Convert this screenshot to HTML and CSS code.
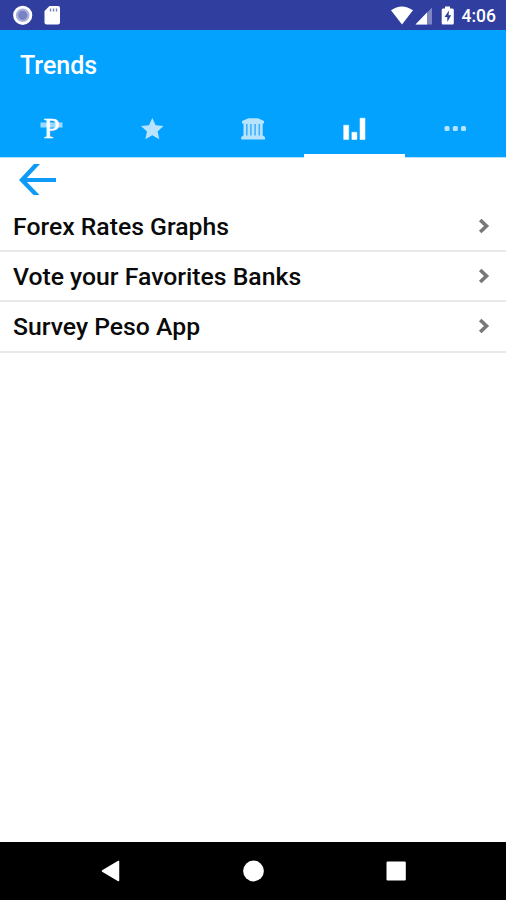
FILE: index.html
```html
<!DOCTYPE html>
<html lang="en">

<head>
    <meta charset="UTF-8">
    <meta name="viewport" content="width=device-width, initial-scale=1.0">
    <link rel="stylesheet" href="styles.css">
    <title>Trends</title>
</head>

<body>

    <div class="status-bar">
        <svg class="status-left" width="54" height="30" viewBox="0 0 54 30">
            <circle cx="10.7" cy="15.3" r="8.2" fill="#a9b0dc" stroke="#fff" stroke-width="2.8"/>
            <circle cx="10.7" cy="15.3" r="4.600" fill="#7883c4"/>
            <path d="M37.5 6H46Q48 6 48 8V22.500Q48 24.500 46 24.500H34.500Q32.500 24.500 32.500 22.500V11Z" fill="#fff"/>
            <path d="M38.500 8.500v3M41.500 8.500v3M44.500 8.500v3" stroke="#7880bd" stroke-width="1.400"/>
        </svg>
        <div class="status-right">
            <svg width="68" height="30" viewBox="0 0 68 30">
                <path d="M2 10.300Q12.800 2.500 24 10.300L13 24.500Z" fill="#fff"/>
                <path d="M26.500 24.500L43 7.500V24.500Z" fill="#7f87c3"/>
                <path d="M26.500 24.500L38 12.500V24.500Z" fill="#fff"/>
                <path d="M56 6.500H61V8.500H63.500Q64.800 8.500 64.800 10V23Q64.800 24.500 63.500 24.500H54Q52.700 24.500 52.700 23V10Q52.700 8.500 54 8.500H56Z" fill="#fff"/>
                <path d="M60 10.500L55.500 17H58.300V22L62.200 15.300H59.600Z" fill="#303f9f"/>
            </svg>
            <span class="clock">4:06</span>
        </div>
    </div>

    <header class="header">
        <h1 class="title">Trends</h1>
        <nav class="tabs">
            <a class="tab">
                <svg class="peso-icon" width="26" height="38" viewBox="0 -6 26 38">
                    <rect x="2.500" y="6.500" width="22" height="5" fill="#fff" opacity="0.6"/>
                    <text class="peso" x="5.500" y="22">P</text>
                </svg>
            </a>
            <a class="tab">
                <svg width="26" height="26" viewBox="0 0 26 26">
                    <path class="dim" d="M13.300 2L16.600 9.300L24.500 10.100L18.600 15.400L20.300 23.200L13.300 19.200L6.300 23.200L8 15.400L2 10.100L10 9.300Z"/>
                </svg>
            </a>
            <a class="tab">
                <svg width="26" height="26" viewBox="0 0 26 26">
                    <path class="dim" d="M2 5L8.500 2.300H18L24 5V7.500H22.700V19.500L25 21V23.500H1.200V21L3.500 19.500V7.500H2Z"/>
                    <path d="M6.800 8v11.500M10.900 8v11.500M15.100 8v11.500M19.300 8v11.500" stroke="#34b0ff" stroke-width="1.500"/>
                </svg>
            </a>
            <a class="tab active">
                <svg width="26" height="26" viewBox="0 0 26 26">
                    <path d="M2.700 9.200h5v14.300h-5zM10.900 16.300h5v7.200h-5zM19 2.200h5v21.300h-5z" fill="#fff" stroke="#fff" stroke-width="0.500" stroke-linejoin="round"/>
                </svg>
            </a>
            <a class="tab">
                <svg width="26" height="26" viewBox="0 0 26 26">
                    <rect class="dim" x="2.500" y="10" width="5" height="5" rx="1.500"/>
                    <rect class="dim" x="10.800" y="10" width="5" height="5" rx="1.500"/>
                    <rect class="dim" x="19" y="10" width="5" height="5" rx="1.500"/>
                </svg>
            </a>
        </nav>
    </header>

    <main class="content">
        <div class="back">
            <svg width="40" height="34" viewBox="0 0 40 34">
                <path d="M38 17H4" stroke="#0e9bf8" stroke-width="4"/>
                <path d="M1 17L16 1H22L7 17L21.500 32H15.500Z" fill="#0e9bf8"/>
            </svg>
        </div>
        <ul class="list">
            <li class="item">
                <span>Forex Rates Graphs</span>
                <svg width="14" height="18" viewBox="0 0 14 18"><path d="M3.200 3L9.500 9L3.200 15"/></svg>
            </li>
            <li class="item">
                <span>Vote your Favorites Banks</span>
                <svg width="14" height="18" viewBox="0 0 14 18"><path d="M3.200 3L9.500 9L3.200 15"/></svg>
            </li>
            <li class="item">
                <span>Survey Peso App</span>
                <svg width="14" height="18" viewBox="0 0 14 18"><path d="M3.200 3L9.500 9L3.200 15"/></svg>
            </li>
        </ul>
    </main>

    <footer class="nav-bar">
        <svg width="24" height="24" viewBox="0 0 24 24"><path d="M3.500 12L19.500 2.500V21.500Z" stroke="#fff" stroke-width="1.500" stroke-linejoin="round"/></svg>
        <svg width="24" height="24" viewBox="0 0 24 24"><circle cx="12.500" cy="12" r="10.400"/></svg>
        <svg width="24" height="24" viewBox="0 0 24 24"><rect x="2.500" y="2.500" width="19.300" height="19" rx="1.200"/></svg>
    </footer>

</body>

</html>
```

FILE: styles.css
```css
body {
    margin: 0;
    height: 100vh;
    display: flex;
    flex-direction: column;
    background: #fff;
    font-family: Roboto, "Liberation Sans", sans-serif;
    overflow: hidden;
}

svg {
    display: block;
    flex-shrink: 0;
}

.status-bar {
    height: 30px;
    display: flex;
    justify-content: space-between;
    background: #303f9f;
    padding: 0 10px 0 12px;
}

.status-right {
    display: flex;
    align-items: center;
    gap: 5px;
}

.clock {
    color: #fff;
    font-size: 17.5px;
    font-weight: 500;
    line-height: 30px;
    padding-top: 2px;
}

.header {
    height: 128px;
    display: flex;
    flex-direction: column;
    background: #03a2ff;
    color: #fff;
}

.title {
    margin: 0;
    padding-left: 20px;
    height: 71px;
    line-height: 71px;
    font-size: 25px;
    font-weight: 500;
}

.tabs {
    display: flex;
    height: 57px;
}

.tab {
    flex: 1;
    display: flex;
    justify-content: center;
    box-sizing: border-box;
    padding-top: 15px;
    border-bottom: 1px solid #b5e1ff;
}

.tab.active {
    border-bottom: 4px solid #fff;
}

.dim {
    fill: #b8e3ff;
}

.peso-icon {
    margin-top: -6px;
}

.peso {
    font-family: "Liberation Serif", serif;
    font-size: 29px;
    fill: #fff;
    stroke: #fff;
    stroke-width: 0.5;
}

.content {
    flex: 1;
}

.back {
    height: 44px;
    padding: 5px 0 0 18px;
    box-sizing: border-box;
}

.list {
    list-style: none;
    margin: 0;
    padding: 0;
}

.item {
    height: 50.2px;
    box-sizing: border-box;
    display: flex;
    align-items: center;
    justify-content: space-between;
    padding: 0 15px 0 13px;
    border-bottom: 2px solid #e9e9e9;
    color: #0a0a0a;
    font-size: 24.75px;
    font-weight: 500;
}

.item path {
    fill: none;
    stroke: #777;
    stroke-width: 3.6;
}

.nav-bar {
    height: 58px;
    display: flex;
    align-items: center;
    justify-content: center;
    gap: 118.5px;
    background: #000;
}

.nav-bar svg {
    fill: #fff;
}
```
